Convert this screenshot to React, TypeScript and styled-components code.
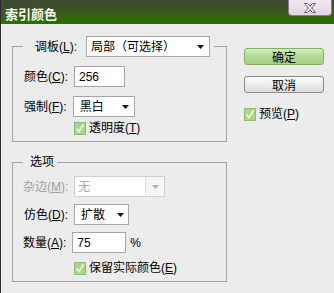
import React from "react";
import styled, { createGlobalStyle } from "styled-components";

const Global = createGlobalStyle`
  html, body { margin: 0; padding: 0; background: #ececec; }
  body {
    font-family: "Liberation Sans", "Noto Sans CJK SC", sans-serif;
    font-size: 12px;
    color: #000;
  }
`;

const Window = styled.div`
  width: 334px;
  height: 293px;
  box-sizing: border-box;
  border-left: 1px solid #2a2a2a;
  background: #ececec;
  display: flex;
  flex-direction: column;
  overflow: hidden;
`;

const TitleBar = styled.div`
  height: 24px;
  flex: none;
  display: flex;
  align-items: flex-start;
  background: linear-gradient(#3e4b32 0%, #3b5129 35%, #306609 70%, #2c6d05 100%);
`;

const Title = styled.div`
  color: #fff;
  font-weight: bold;
  font-size: 13px;
  line-height: 14px;
  font-family: "Noto Sans CJK SC", sans-serif;
  margin: 7px 0 0 4px;
`;

const CloseBtn = styled.div`
  margin-left: auto;
  margin-right: 2px;
  width: 44px;
  height: 16px;
  box-sizing: border-box;
  background: linear-gradient(#f1e8f2, #e2d4e5);
  border: 1px solid #8e7a92;
  border-top: none;
  border-radius: 0 0 4px 4px;
  display: flex;
  align-items: center;
  justify-content: center;
`;

const Body = styled.div`
  display: flex;
  padding: 12px 0 0 11px;
  gap: 17px;
`;

const LeftCol = styled.div`
  width: 215px;
  display: flex;
  flex-direction: column;
`;

const Group = styled.fieldset<{ $top?: number; $pb: number }>`
  margin: ${(p) => p.$top ?? 0}px 0 0 0;
  padding: 0 0 ${(p) => p.$pb}px 10px;
  border: 1px solid #a3a3a3;
  min-width: 0;
  display: flex;
  flex-direction: column;
`;

const Legend = styled.legend<{ $pl: number; $pr: number }>`
  padding: 0 ${(p) => p.$pr}px 0 ${(p) => p.$pl}px;
  display: flex;
  align-items: center;
  gap: 9px;
  line-height: 14px;
`;

const Row = styled.div<{ $mt: number; $pl?: number; $gap?: number }>`
  display: flex;
  align-items: center;
  margin-top: ${(p) => p.$mt}px;
  padding-left: ${(p) => p.$pl ?? 1}px;
  gap: ${(p) => p.$gap ?? 6}px;
  height: 21px;
`;

const CheckRow = styled.label<{ $mt: number; $pl: number }>`
  display: flex;
  align-items: center;
  gap: 3px;
  margin-top: ${(p) => p.$mt}px;
  padding-left: ${(p) => p.$pl}px;
  height: 13px;
  line-height: 13px;
`;

const Label = styled.span<{ $disabled?: boolean }>`
  white-space: nowrap;
  line-height: 14px;
  color: ${(p) => (p.$disabled ? "#a0a0a0" : "#000")};
`;

const Select = styled.div<{ $w: number; $disabled?: boolean }>`
  width: ${(p) => p.$w}px;
  height: 21px;
  box-sizing: border-box;
  border: 1px solid ${(p) => (p.$disabled ? "#cfcfcf" : "#a6a6a6")};
  background: #fff;
  display: flex;
  align-items: center;
  color: ${(p) => (p.$disabled ? "#a8a8a8" : "#000")};
  white-space: nowrap;
`;

const SelectText = styled.span<{ $pl: number }>`
  padding-left: ${(p) => p.$pl}px;
  line-height: 14px;
  flex: 1;
`;

const ArrowBox = styled.span<{ $w: number; $disabled?: boolean }>`
  width: ${(p) => p.$w}px;
  height: 100%;
  display: flex;
  align-items: center;
  justify-content: center;
  box-sizing: border-box;
  border-left: ${(p) => (p.$disabled ? "1px solid #e2e2e2" : "none")};
  background: ${(p) => (p.$disabled ? "#f5f5f5" : "transparent")};
`;

const Input = styled.div<{ $w: number; $pl: number }>`
  width: ${(p) => p.$w}px;
  height: 21px;
  box-sizing: border-box;
  border: 1px solid #a6a6a6;
  background: #fff;
  display: flex;
  align-items: center;
  padding-left: ${(p) => p.$pl}px;
  line-height: 14px;
`;

const RightCol = styled.div`
  width: 80px;
  margin-top: 12px;
  display: flex;
  flex-direction: column;
`;

const Button = styled.div<{ $primary?: boolean; $mt: number }>`
  height: 17px;
  margin-top: ${(p) => p.$mt}px;
  box-sizing: border-box;
  border: 1px solid ${(p) => (p.$primary ? "#7db35c" : "#8a8a8a")};
  border-radius: 3px;
  background: ${(p) =>
    p.$primary
      ? "linear-gradient(#d3ecbf, #b2da94 50%, #a4d284)"
      : "linear-gradient(#fbfbfb, #ececec 50%, #dcdcdc)"};
  display: flex;
  align-items: center;
  justify-content: center;
  font-family: "Noto Sans CJK SC", sans-serif;
  line-height: 14px;
`;

const Pct = styled.span`
  margin-left: -2px;
  line-height: 14px;
`;

const Arrow = ({ disabled }: { disabled?: boolean }) => (
  <svg width="7" height="4" viewBox="0 0 7 4">
    <path d="M0 0 H7 L3.5 4 Z" fill={disabled ? "#b0b0b0" : "#111"} />
  </svg>
);

const Check = () => (
  <svg width="12" height="13" viewBox="0 0 12 13">
    <rect x="0.5" y="0.5" width="11" height="12" fill="#a9d58c" stroke="#8cc06c" />
    <path d="M2.5 6.5 L5 9.5 L9.5 2.5" fill="none" stroke="#eef9e4" strokeWidth="1.8" />
  </svg>
);

const CloseGlyph = () => (
  <svg width="12" height="10" viewBox="0 0 12 10">
    <path
      d="M0.5 0.5 H3.5 L6 3.3 L8.5 0.5 H11.5 L7.6 5 L11.5 9.5 H8.5 L6 6.7 L3.5 9.5 H0.5 L4.4 5 Z"
      fill="#f6f0f7"
      stroke="#6f5c74"
      strokeWidth="1"
    />
  </svg>
);

export default function App() {
  return (
    <>
      <Global />
      <Window>
        <TitleBar>
          <Title>索引颜色</Title>
          <CloseBtn>
            <CloseGlyph />
          </CloseBtn>
        </TitleBar>
        <Body>
          <LeftCol>
            <Group $pb={6}>
              <Legend $pl={12} $pr={4}>
                <Label>
                  调板(<u>L</u>):
                </Label>
                <Select $w={124}>
                  <SelectText $pl={4}>局部（可选择）</SelectText>
                  <ArrowBox $w={18}>
                    <Arrow />
                  </ArrowBox>
                </Select>
              </Legend>
              <Row $mt={9}>
                <Label>
                  颜色(<u>C</u>):
                </Label>
                <Input $w={51} $pl={4}>256</Input>
              </Row>
              <Row $mt={9}>
                <Label>
                  强制(<u>F</u>):
                </Label>
                <Select $w={62}>
                  <SelectText $pl={6}>黑白</SelectText>
                  <ArrowBox $w={17}>
                    <Arrow />
                  </ArrowBox>
                </Select>
              </Row>
              <CheckRow $mt={5} $pl={51}>
                <Check />
                <span>
                  透明度(<u>T</u>)
                </span>
              </CheckRow>
            </Group>

            <Group $top={13} $pb={6}>
              <Legend $pl={7} $pr={3}>
                <Label>选项</Label>
              </Legend>
              <Row $mt={7} $pl={0}>
                <Label $disabled>
                  杂边(<u>M</u>):
                </Label>
                <Select $w={91} $disabled>
                  <SelectText $pl={3}>无</SelectText>
                  <ArrowBox $w={19} $disabled>
                    <Arrow disabled />
                  </ArrowBox>
                </Select>
              </Row>
              <Row $mt={7}>
                <Label>
                  仿色(<u>D</u>):
                </Label>
                <Select $w={55}>
                  <SelectText $pl={6}>扩散</SelectText>
                  <ArrowBox $w={16}>
                    <Arrow />
                  </ArrowBox>
                </Select>
              </Row>
              <Row $mt={7} $pl={0}>
                <Label>
                  数量(<u>A</u>):
                </Label>
                <Input $w={54} $pl={4}>75</Input>
                <Pct>%</Pct>
              </Row>
              <CheckRow $mt={9} $pl={51}>
                <Check />
                <span>
                  保留实际颜色(<u>E</u>)
                </span>
              </CheckRow>
            </Group>
          </LeftCol>

          <RightCol>
            <Button $primary $mt={0}>确定</Button>
            <Button $mt={11}>取消</Button>
            <CheckRow $mt={15} $pl={0}>
              <Check />
              <span>
                预览(<u>P</u>)
              </span>
            </CheckRow>
          </RightCol>
        </Body>
      </Window>
    </>
  );
}
